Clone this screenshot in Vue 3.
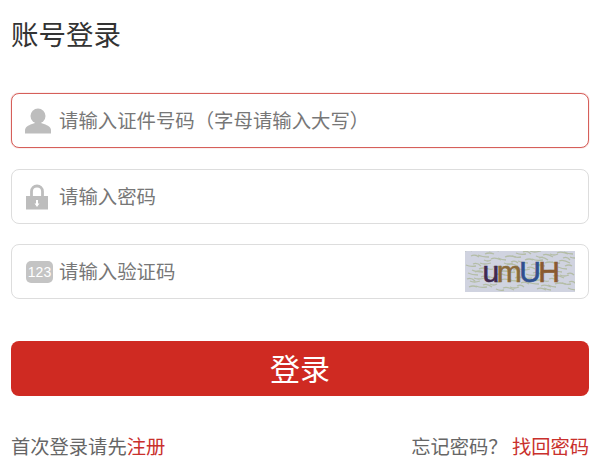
<template>
  <div class="login">
    <h1 class="title">账号登录</h1>

    <div class="field active">
      <svg class="icon" viewBox="0 0 26 26">
        <circle cx="13" cy="8" r="7.500" fill="#bdbdbd" />
        <path d="M0 25.500v-3c0-3.500 3-5 7-6.500l3-1h6l3 1c4 1.500 7 3 7 6.500v3z" fill="#bdbdbd" />
      </svg>
      <input class="input" type="text" placeholder="请输入证件号码（字母请输入大写）" />
    </div>

    <div class="field">
      <svg class="icon" viewBox="0 0 26 26">
        <path d="M6.500 12V7.500a5.500 5.500 0 0 1 11 0V12" fill="none" stroke="#bdbdbd" stroke-width="2.800" />
        <path fill-rule="evenodd" fill="#bdbdbd" d="M1 12h22v13.500H1zM11 16v3.500H9.500l2.500 3.500 2.500-3.500H13V16z" />
      </svg>
      <input class="input" type="text" placeholder="请输入密码" />
    </div>

    <div class="field">
      <span class="badge">123</span>
      <input class="input" type="text" placeholder="请输入验证码" />
      <div class="captcha">
        <svg class="noise" viewBox="0 0 110 41" preserveAspectRatio="none">
          <path v-for="(d, i) in noise" :key="i" :d="d" fill="none" stroke="#b4bda6" stroke-width="1.300" />
        </svg>
        <span class="code">
          <span v-for="c in code" :key="c.t" :style="{ color: c.color }">{{ c.t }}</span>
        </span>
      </div>
    </div>

    <button class="submit">登录</button>

    <div class="links">
      <span>首次登录请先<a class="red">注册</a></span>
      <span>忘记密码？ <a class="red">找回密码</a></span>
    </div>
  </div>
</template>

<script setup>
const code = [
  { t: 'u', color: '#3f2a4f' },
  { t: 'm', color: '#8a6a3a' },
  { t: 'U', color: '#2f4f8f' },
  { t: 'H', color: '#8a5a30' }
]

// specks behind the captcha letters, fixed so the picture stays the same
const noise = []
for (let i = 0; i < 90; i++) {
  const x = (i * 37) % 106
  const y = (i * 23) % 39
  noise.push(`M${x} ${y}q4 ${i % 2 ? 2 : -2} ${7 + (i % 5)} ${i % 3}`)
}
</script>

<style scoped>
.login {
  width: 600px;
  height: 471px;
  box-sizing: border-box;
  padding: 15px 11px 0;
  overflow: hidden;
  font-family: "Noto Sans CJK SC", "Noto Sans", sans-serif;
  color: #666;
}

.title {
  margin: 0 0 39px;
  height: 39px;
  line-height: 36px;
  font-size: 27.500px;
  font-weight: 400;
  color: #333;
}

.field {
  display: flex;
  align-items: center;
  height: 55px;
  box-sizing: border-box;
  margin-bottom: 21px;
  padding: 0 13px;
  border: 1px solid #ddd;
  border-radius: 8px;
}

.field:nth-of-type(2) {
  margin-bottom: 20px;
}

.field:nth-of-type(3) {
  margin-bottom: 42px;
}

.active {
  border-color: #d65f5a;
  box-shadow: 0 0 1px #d65f5a;
}

.icon {
  flex: none;
  width: 26px;
  height: 26px;
}

.badge {
  flex: none;
  width: 27px;
  height: 22px;
  margin: 0 -2px 0 1px;
  border-radius: 5px;
  background: #c4c4c4;
  color: #fff;
  font-family: "Liberation Sans", sans-serif;
  font-size: 14px;
  line-height: 22px;
  text-align: center;
}

.input {
  flex: 1;
  min-width: 0;
  margin: 0 0 2px 8px;
  padding: 0;
  border: 0;
  outline: 0;
  background: none;
  font-family: inherit;
  font-size: 19.400px;
}

.input::placeholder {
  color: #777;
  opacity: 1;
}

.captcha {
  position: relative;
  flex: none;
  display: flex;
  align-items: center;
  justify-content: center;
  width: 110px;
  height: 41px;
  background: #d0d3e0;
}

.noise {
  position: absolute;
  inset: 0;
  width: 100%;
  height: 100%;
}

.code {
  position: relative;
  font-family: "Liberation Sans", sans-serif;
  font-size: 30px;
  line-height: 36px;
  letter-spacing: -2.500px;
  -webkit-text-stroke: 0.600px currentColor;
}

.submit {
  display: block;
  width: 100%;
  height: 55px;
  padding: 0 0 3px;
  border: 0;
  border-radius: 8px;
  background: #cf2a22;
  color: #fff;
  font-family: inherit;
  font-size: 30px;
}

.links {
  display: flex;
  justify-content: space-between;
  margin-top: 37px;
  font-size: 19.300px;
  line-height: 26px;
}

.red {
  color: #c9302c;
}
</style>
